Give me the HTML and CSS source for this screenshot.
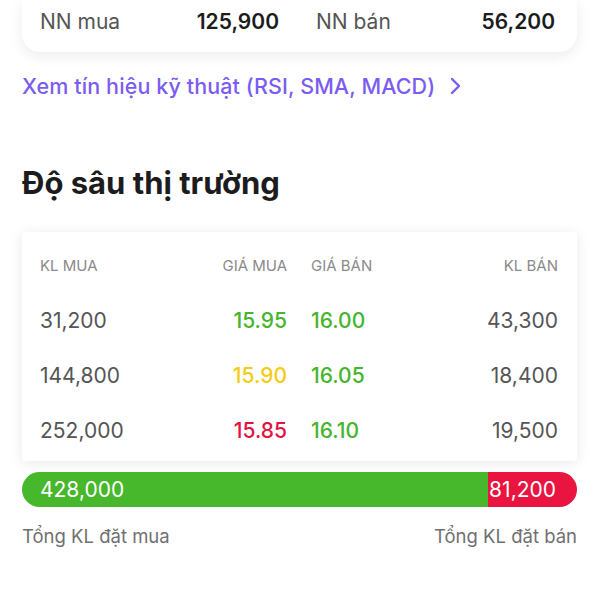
FILE: index.html
```html
<!DOCTYPE html>
<html lang="vi">
<head>
  <meta charset="UTF-8">
  <title>Độ sâu thị trường</title>
  <link rel="stylesheet" href="styles.css">
</head>
<body>

  <div class="page">

    <!-- foreign investor summary -->
    <div class="summary">
      <div class="summary-item">
        <span class="summary-label">NN mua</span>
        <span class="summary-value">125,900</span>
      </div>
      <div class="summary-item">
        <span class="summary-label">NN bán</span>
        <span class="summary-value">56,200</span>
      </div>
    </div>

    <a class="signal-link" href="#">
      Xem tín hiệu kỹ thuật (RSI, SMA, MACD)
      <svg class="chevron" width="12" height="18" viewBox="0 0 12 18">
        <path d="M3 2 L10 9 L3 16" fill="none" stroke="currentColor" stroke-width="2.4" stroke-linecap="round" stroke-linejoin="round"/>
      </svg>
    </a>

    <h2 class="section-title">Độ sâu thị trường</h2>

    <div class="depth">
      <div class="depth-row depth-head">
        <span>KL mua</span>
        <span class="right">Giá mua</span>
        <span>Giá bán</span>
        <span class="right">KL bán</span>
      </div>
      <div class="depth-row">
        <span>31,200</span>
        <span class="right price up">15.95</span>
        <span class="price up">16.00</span>
        <span class="right">43,300</span>
      </div>
      <div class="depth-row">
        <span>144,800</span>
        <span class="right price ref">15.90</span>
        <span class="price up">16.05</span>
        <span class="right">18,400</span>
      </div>
      <div class="depth-row">
        <span>252,000</span>
        <span class="right price down">15.85</span>
        <span class="price up">16.10</span>
        <span class="right">19,500</span>
      </div>
    </div>

    <!-- 428,000 / (428,000 + 81,200) = 84.05% -->
    <div class="total-bar">
      <div class="total-buy" style="width: 84.05%">428,000</div>
      <div class="total-sell" style="width: 15.95%">81,200</div>
    </div>

    <div class="total-labels">
      <span>Tổng KL đặt mua</span>
      <span>Tổng KL đặt bán</span>
    </div>

  </div>

</body>
</html>
```

FILE: styles.css
```css
body {
  margin: 0;
  padding: 0;
  background: #ffffff;
  font-family: Inter, "Noto Sans", sans-serif;
  color: #555555;
}

.page {
  padding: 0 23px 0 22px;
}

.summary {
  display: grid;
  grid-template-columns: 1fr 1fr;
  column-gap: 37px;
  align-items: center;
  height: 52px;
  padding: 0 22px 10px 18px;
  box-sizing: border-box;
  background: #ffffff;
  border-radius: 0 0 18px 18px;
  box-shadow: 0 4px 14px rgba(0, 0, 0, 0.08);
}

.summary-item {
  display: flex;
  justify-content: space-between;
  font-size: 21px;
}

.summary-label {
  color: #555555;
}

.summary-value {
  font-weight: 600;
  color: #1c1c1e;
}

.signal-link {
  display: flex;
  align-items: center;
  gap: 14px;
  margin-top: 21px;
  font-size: 21.5px;
  letter-spacing: 0.1px;
  font-weight: 500;
  color: #7b5cf2;
  text-decoration: none;
}

.section-title {
  margin: 62px 0 0 0;
  font-size: 31px;
  font-weight: 700;
  color: #1c1c1e;
  line-height: 44px;
}

.depth {
  margin-top: 27px;
  padding: 6px 19px 3px 18px;
  background: #ffffff;
  border-radius: 3px;
  box-shadow: 0 2px 14px rgba(0, 0, 0, 0.09);
}

.depth-row {
  display: grid;
  grid-template-columns: 1fr 1fr 1fr 1fr;
  column-gap: 24px;
  align-items: center;
  height: 55px;
  font-size: 21px;
  color: #555555;
}

.depth-head {
  font-size: 15px;
  text-transform: uppercase;
  color: #8a8a8a;
}

.right {
  text-align: right;
}

.price {
  font-weight: 500;
}

.up {
  color: #45b52c;
}

.ref {
  color: #f5cc12;
}

.down {
  color: #e3123f;
}

.total-bar {
  display: flex;
  margin-top: 11px;
  height: 35px;
  border-radius: 18px;
  overflow: hidden;
  font-size: 21px;
  color: #ffffff;
}

.total-buy,
.total-sell {
  display: flex;
  align-items: center;
  box-sizing: border-box;
  white-space: nowrap;
}

.total-buy {
  padding-left: 18px;
  background: #47b72b;
}

.total-sell {
  justify-content: flex-end;
  padding-right: 21px;
  background: #e9143f;
}

.total-labels {
  display: flex;
  justify-content: space-between;
  margin-top: 18px;
  font-size: 18.5px;
  color: #707070;
}
```
